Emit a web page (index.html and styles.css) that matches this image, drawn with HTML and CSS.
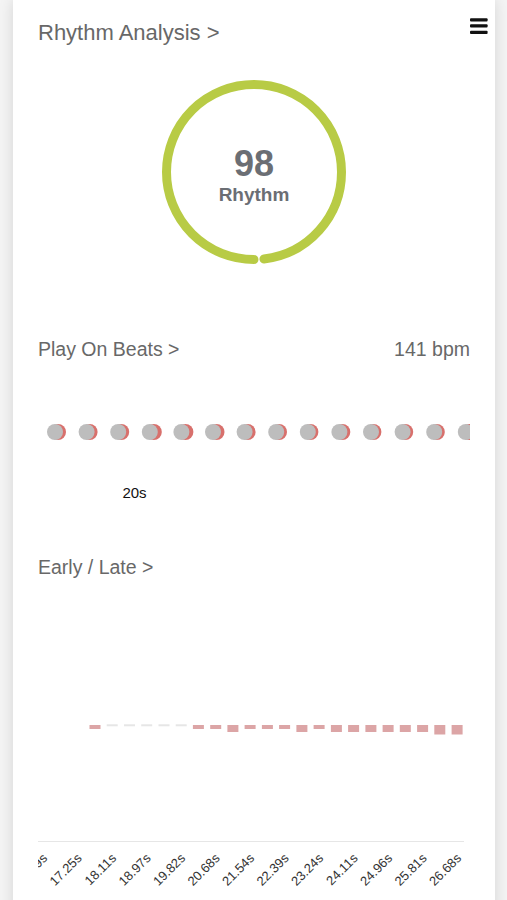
FILE: index.html
```html
<!DOCTYPE html>
<html lang="en">
<head>
  <meta charset="UTF-8">
  <meta name="viewport" content="width=device-width, initial-scale=1.0">
  <title>Rhythm Analysis</title>
  <link rel="stylesheet" href="styles.css">
</head>
<body>
  <div class="card">
    <header class="top">
      <h1 class="title">Rhythm Analysis &gt;</h1>
      <button class="menu" aria-label="Menu">
        <svg width="18" height="16" viewBox="0 0 18 16">
          <rect x="0" y="0.3" width="17.6" height="3.3" rx="1"/>
          <rect x="0" y="6.3" width="17.6" height="3.3" rx="1"/>
          <rect x="0" y="12.7" width="17.6" height="3.3" rx="1"/>
        </svg>
      </button>
    </header>

    <div class="gauge">
      <svg class="ring" width="200" height="200" viewBox="0 0 200 200">
        <circle cx="100" cy="100" r="87.5" fill="none" stroke="#b8cb45" stroke-width="9"
                stroke-linecap="round" stroke-dasharray="538.8 600" transform="rotate(90 100 100)"/>
      </svg>
      <div class="score">
        <div class="score-num">98</div>
        <div class="score-label">Rhythm</div>
      </div>
    </div>

    <div class="section-head beats-head">
      <h2 class="section-title">Play On Beats &gt;</h2>
      <span class="bpm">141 bpm</span>
    </div>

    <svg class="beats" width="432" height="110" viewBox="0 0 432 110">
      <g class="hit">
        <circle cx="20" cy="20" r="8"/>
        <circle cx="51.6" cy="20" r="8"/>
        <circle cx="83.2" cy="20" r="8"/>
        <circle cx="115.8" cy="20" r="8"/>
        <circle cx="147.4" cy="20" r="8"/>
        <circle cx="178.5" cy="20" r="8"/>
        <circle cx="209.6" cy="20" r="8"/>
        <circle cx="241" cy="20" r="8"/>
        <circle cx="272.4" cy="20" r="8"/>
        <circle cx="304.3" cy="20" r="8"/>
        <circle cx="335.4" cy="20" r="8"/>
        <circle cx="367.2" cy="20" r="8"/>
        <circle cx="398.8" cy="20" r="8"/>
        <circle cx="430.6" cy="20" r="8"/>
      </g>
      <g class="beat">
        <circle cx="17" cy="20" r="8"/>
        <circle cx="48.6" cy="20" r="8"/>
        <circle cx="80.2" cy="20" r="8"/>
        <circle cx="111.8" cy="20" r="8"/>
        <circle cx="143.4" cy="20" r="8"/>
        <circle cx="175" cy="20" r="8"/>
        <circle cx="206.6" cy="20" r="8"/>
        <circle cx="238.2" cy="20" r="8"/>
        <circle cx="269.8" cy="20" r="8"/>
        <circle cx="301.4" cy="20" r="8"/>
        <circle cx="333" cy="20" r="8"/>
        <circle cx="364.6" cy="20" r="8"/>
        <circle cx="396.2" cy="20" r="8"/>
        <circle cx="427.8" cy="20" r="8"/>
      </g>
      <text class="time-tick" x="96.5" y="85.5" text-anchor="middle">20s</text>
    </svg>

    <div class="section-head late-head">
      <h2 class="section-title">Early / Late &gt;</h2>
    </div>

    <svg class="offsets" width="432" height="300" viewBox="0 0 432 300">
      <g class="late">
        <rect x="51.5" y="125" width="11" height="4"/>
        <rect x="154.9" y="125" width="11" height="4"/>
        <rect x="172.2" y="125" width="11" height="4"/>
        <rect x="189.4" y="125" width="11" height="7"/>
        <rect x="206.6" y="125" width="11" height="4"/>
        <rect x="223.9" y="125" width="11" height="4"/>
        <rect x="241.1" y="125" width="11" height="4"/>
        <rect x="258.4" y="125" width="11" height="7"/>
        <rect x="275.6" y="125" width="11" height="4"/>
        <rect x="292.9" y="125" width="11" height="7"/>
        <rect x="310.1" y="125" width="11" height="7"/>
        <rect x="327.4" y="125" width="11" height="7"/>
        <rect x="344.6" y="125" width="11" height="7"/>
        <rect x="361.8" y="125" width="11" height="7"/>
        <rect x="379.1" y="125" width="11" height="7"/>
        <rect x="396.3" y="125" width="11" height="9.5"/>
        <rect x="413.6" y="125" width="11" height="9.5"/>
      </g>
      <g class="ontime">
        <rect x="68.7" y="124.3" width="11" height="2"/>
        <rect x="86" y="124.3" width="11" height="2"/>
        <rect x="103.2" y="124.3" width="11" height="2"/>
        <rect x="120.5" y="124.3" width="11" height="2"/>
        <rect x="137.7" y="124.3" width="11" height="2"/>
      </g>
      <line class="axis" x1="0" y1="241.5" x2="426" y2="241.5"/>
      <g class="ticks">
        <text transform="translate(10 259) rotate(-45)">16.39s</text>
        <text transform="translate(44.5 259) rotate(-45)">17.25s</text>
        <text transform="translate(79 259) rotate(-45)">18.11s</text>
        <text transform="translate(113.5 259) rotate(-45)">18.97s</text>
        <text transform="translate(148 259) rotate(-45)">19.82s</text>
        <text transform="translate(182.5 259) rotate(-45)">20.68s</text>
        <text transform="translate(217 259) rotate(-45)">21.54s</text>
        <text transform="translate(251.5 259) rotate(-45)">22.39s</text>
        <text transform="translate(286 259) rotate(-45)">23.24s</text>
        <text transform="translate(320.5 259) rotate(-45)">24.11s</text>
        <text transform="translate(355 259) rotate(-45)">24.96s</text>
        <text transform="translate(389.5 259) rotate(-45)">25.81s</text>
        <text transform="translate(424 259) rotate(-45)">26.68s</text>
      </g>
    </svg>
  </div>
</body>
</html>
```

FILE: styles.css
```css
body {
  font-family: "Liberation Sans", Arial, sans-serif;
  margin: 0;
  background-color: #f4f4f4;
  overflow: hidden;
}
.card {
  margin: 0 12px 0 13px;
  min-height: 900px;
  padding: 19px 25px 0;
  background-color: white;
  box-shadow: 0 0 14px rgba(0, 0, 0, 0.13);
}
.top {
  display: flex;
  justify-content: space-between;
  align-items: flex-start;
}
.title {
  margin: 0;
  font-size: 22px;
  line-height: 28px;
  font-weight: normal;
  color: #686868;
}
.menu {
  margin: -1px -18px 0 0;
  padding: 0;
  border: none;
  background: none;
  line-height: 0;
  cursor: pointer;
}
.menu rect {
  fill: #111;
}
.gauge {
  display: grid;
  justify-content: center;
  margin-top: 25px;
}
.gauge > * {
  grid-area: 1 / 1;
}
.ring {
  display: block;
}
.score {
  align-self: center;
  justify-self: center;
  padding-top: 6px;
  text-align: center;
  color: #6b6e74;
  font-weight: bold;
}
.score-num {
  font-size: 36px;
  line-height: 38px;
}
.score-label {
  margin-top: 1px;
  font-size: 19px;
  line-height: 22px;
}
.section-head {
  display: flex;
  justify-content: space-between;
  align-items: baseline;
}
.beats-head {
  margin-top: 64px;
}
.late-head {
  margin-top: 32px;
}
.section-title {
  margin: 0;
  font-size: 19.5px;
  line-height: 26px;
  font-weight: normal;
  color: #686868;
}
.bpm {
  font-size: 19.5px;
  line-height: 26px;
  color: #686868;
}
.beats {
  display: block;
  margin-top: 50px;
}
.beats .hit circle {
  fill: #d8706c;
}
.beats .beat circle {
  fill: #bdbdbd;
}
.time-tick {
  font-size: 15px;
  fill: #111;
}
.offsets {
  display: block;
  margin-top: 19.5px;
}
.late rect {
  fill: #dca5a6;
}
.ontime rect {
  fill: #e6e6e6;
}
.axis {
  stroke: #e6e6e6;
  stroke-width: 1;
}
.ticks text {
  font-size: 13px;
  fill: #333;
  text-anchor: end;
}
```
